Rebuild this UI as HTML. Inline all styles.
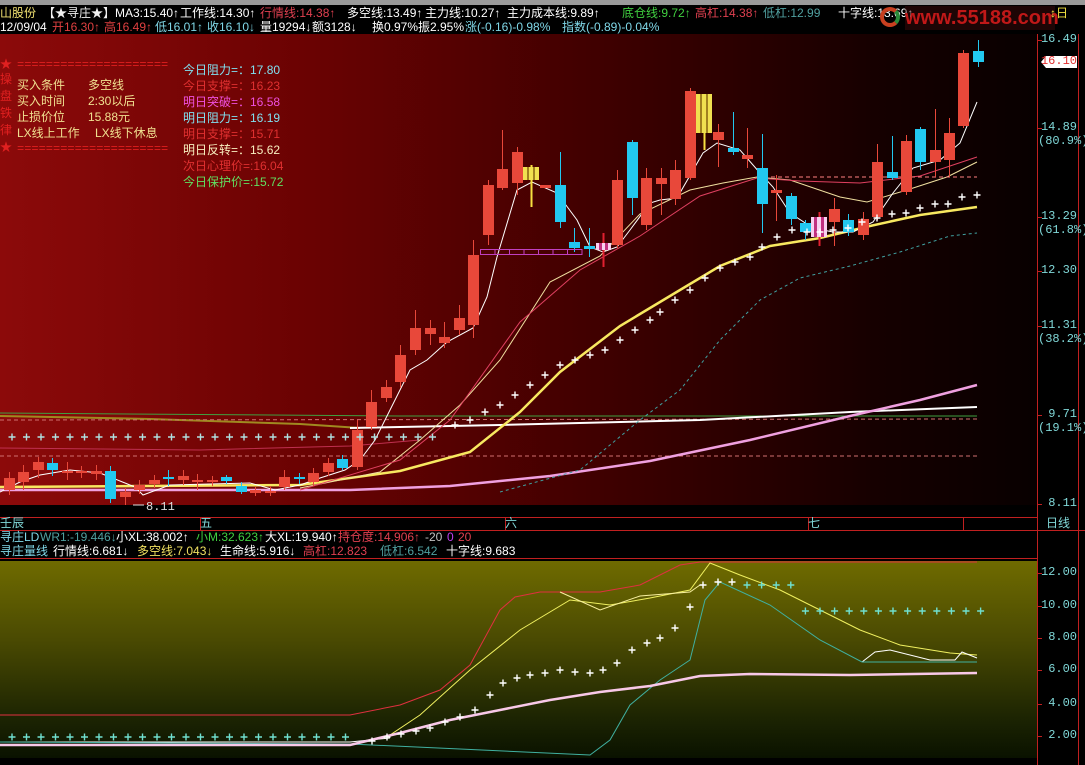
<!DOCTYPE html>
<html><head><meta charset="utf-8">
<style>
*{margin:0;padding:0}
body{width:1085px;height:765px;background:#000;overflow:hidden;position:relative;font-family:"Liberation Sans","Noto Sans CJK SC",sans-serif;font-size:12px;}
.t{position:absolute;white-space:nowrap;line-height:13px;font-size:12px}
.m{font-family:"Liberation Mono","Noto Sans CJK SC",monospace}
#main{position:absolute;left:0;top:34px;width:1037px;height:471px;background:linear-gradient(to right,#8c0a0a 0%,#6a0202 30%,#3c0000 60%,#150000 85%,#080000 100%)}
#sub{position:absolute;left:0;top:561px;width:1037px;height:197px;background:linear-gradient(to bottom,#6f6b00 0%,#4a4a02 40%,#1c2402 80%,#0a1200 100%)}
</style></head><body>
<div style="position:absolute;left:0;top:0;width:1085px;height:5px;background:#9a9a9a"></div>
<div id="main"></div>
<div id="sub"></div>

<svg id="sv" width="1085" height="765" style="position:absolute;left:0;top:0">
<g id="g"></g>
<line x1="1037.5" y1="34" x2="1037.5" y2="765" stroke="#c02020"/>
<line x1="1078.5" y1="34" x2="1078.5" y2="765" stroke="#c02020"/>
<line x1="0" y1="517.5" x2="1037" y2="517.5" stroke="#c02020"/>
<line x1="0" y1="530.5" x2="1085" y2="530.5" stroke="#c02020"/>
<line x1="0" y1="558.5" x2="1037" y2="558.5" stroke="#c02020"/>
<line x1="200.5" y1="517" x2="200.5" y2="530" stroke="#c02020"/>
<line x1="505.5" y1="517" x2="505.5" y2="530" stroke="#c02020"/>
<line x1="808.5" y1="517" x2="808.5" y2="530" stroke="#c02020"/>
<line x1="963.5" y1="517" x2="963.5" y2="530" stroke="#c02020"/>
<g stroke="#c02020">
<line x1="1037" y1="40.5" x2="1042" y2="40.5"/><line x1="1037" y1="128.5" x2="1042" y2="128.5"/><line x1="1037" y1="217.5" x2="1042" y2="217.5"/><line x1="1037" y1="271.5" x2="1042" y2="271.5"/><line x1="1037" y1="326.5" x2="1042" y2="326.5"/><line x1="1037" y1="415.5" x2="1042" y2="415.5"/><line x1="1037" y1="504.5" x2="1042" y2="504.5"/>
<line x1="1037" y1="573.5" x2="1042" y2="573.5"/><line x1="1037" y1="606.5" x2="1042" y2="606.5"/><line x1="1037" y1="638.5" x2="1042" y2="638.5"/><line x1="1037" y1="670.5" x2="1042" y2="670.5"/><line x1="1037" y1="704.5" x2="1042" y2="704.5"/><line x1="1037" y1="736.5" x2="1042" y2="736.5"/>
</g>
<polygon points="1041,62 1046,56 1077,56 1077,68 1046,68" fill="#fff"/>
<line x1="133" y1="505" x2="144" y2="505" stroke="#ddd"/>
</svg>

<script>
var g=document.getElementById('g'),s='';
function P(pts,c,w,d){s+='<polyline fill="none" stroke="'+c+'" stroke-width="'+(w||1)+'"'+(d?' stroke-dasharray="'+d+'"':'')+' points="'+pts+'"/>';}
P('0,413 400,416 977,416','#40a040',1);
P('0,416 150,419 300,424 360,428','#a08a20',2);
P('0,420 977,419','#d07070',1,'4,3');
P('0,456 977,456','#d07070',1,'4,3');
P('0,448 200,450 350,446 420,440','#c03050',1);
P('350,428 500,425 700,420 850,412 977,407','#fff',2);
P('0,490 350,490 450,486 550,476 650,461 750,440 850,416 920,400 977,385','#f0a0e0',2.5);
P('500,492 580,470 640,420 680,390 720,340 760,300 800,278 850,266 900,252 950,236 977,233','#40a0a0',1,'3,3');
P('0,487 300,485 400,471 470,452 520,412 560,372 620,326 680,290 720,266 770,246 820,238 870,226 920,215 977,207','#f8e860',2.5);
P('300,488 380,472 420,440 460,405 500,360 550,282 600,256 640,214 690,190 723,183 757,177 790,180 840,197 867,202 907,190 947,177 977,162','#f0e0a0',1);
P('300,490 400,460 450,420 520,322 580,270 640,236 700,196 757,178 800,181 860,183 920,176 977,157','#e04060',1);
P('757,177 977,177','#ff8080',1,'4,3');
P('0,492 20,482 40,475 70,470 100,473 135,487 143,495 170,485 250,483 275,490 300,485 320,478 345,470 360,460 375,440 390,410 410,370 427,360 447,342 473,328 487,297 497,257 517,190 532,182 557,193 577,220 590,247 603,252 617,247 630,230 650,203 660,200 677,198 703,153 717,143 740,150 760,173 773,187 790,213 813,228 833,232 853,232 873,222 893,193 913,168 940,160 960,143 977,102','#fff',1);
var C=[[9,478,490,0,472,495],[23,472,482,0,465,490],[38,462,470,0,457,478],[52,463,470,1,458,476],[67,471,473,0,462,480],[81,471,473,0,466,478],[96,471,474,0,465,480],[110,471,499,1,466,503],[125,492,497,0,488,505],[139,485,490,0,480,494],[154,480,484,0,475,488],[168,477,479,1,470,486],[183,476,480,0,470,485],[197,480,482,0,474,490],[212,480,482,0,476,486],[226,477,481,1,475,484],[241,486,492,1,482,494],[255,490,493,0,487,496],[270,491,493,0,486,496],[284,477,487,0,470,490],[299,477,479,1,473,484],[313,473,482,0,468,486],[328,463,472,0,458,476],[342,459,468,1,455,470],[357,430,467,0,420,470],[371,402,427,0,390,430],[386,387,398,0,380,402],[400,355,382,0,345,388],[415,328,350,0,310,355],[430,328,334,0,320,345],[444,337,343,0,322,348],[459,318,330,0,305,335],[473,255,325,0,240,338],[488,185,235,0,180,245],[502,169,188,0,130,190],[517,152,183,0,147,195],[560,185,222,1,152,228],[574,242,248,1,228,252],[589,246,249,1,228,257],[617,180,245,0,170,248],[632,142,198,1,140,215],[646,178,225,0,168,230],[661,178,184,0,168,215],[675,170,199,0,160,205],[690,91,178,0,88,180],[718,132,140,0,124,167],[733,148,152,1,112,155],[747,155,159,0,128,168],[762,168,204,1,134,233],[776,190,193,0,175,221],[791,196,219,1,193,225],[805,223,232,1,220,240],[834,209,222,0,198,246],[848,220,232,1,214,236],[863,219,235,0,212,240],[877,162,217,0,144,220],[892,172,178,1,136,180],[906,141,192,0,135,195],[920,129,162,1,127,170],[935,150,162,0,109,177],[949,133,160,0,118,177],[963,53,126,0,50,128],[978,51,62,1,40,67]];
C.forEach(function(c){var col=c[3]?'#22c8f0':'#e8483a';s+='<line x1="'+c[0]+'.5" y1="'+c[4]+'" x2="'+c[0]+'.5" y2="'+c[5]+'" stroke="'+col+'"/><rect x="'+(c[0]-5)+'" y="'+c[1]+'" width="11" height="'+Math.max(2,c[2]-c[1])+'" fill="'+col+'"/>';});
s+='<line x1="531.5" y1="165" x2="531.5" y2="207" stroke="#f8e040" stroke-width="2"/><rect x="523" y="167" width="16" height="13" fill="#f0e050"/><rect x="527" y="167" width="2" height="13" fill="#a08020"/><rect x="533" y="167" width="2" height="13" fill="#a08020"/>';
s+='<rect x="540" y="185" width="11" height="3" fill="#e8483a"/>';
s+='<line x1="704.5" y1="94" x2="704.5" y2="150" stroke="#f8e040" stroke-width="2"/><rect x="696" y="94" width="16" height="39" fill="#f0e050"/><rect x="700" y="94" width="2" height="39" fill="#a08020"/><rect x="706" y="94" width="2" height="39" fill="#a08020"/>';
s+='<line x1="603.5" y1="233" x2="603.5" y2="267" stroke="#e02030" stroke-width="2"/><rect x="596" y="243" width="15" height="7" fill="#f8d0f0"/><rect x="599" y="243" width="3" height="7" fill="#c03080"/><rect x="605" y="243" width="3" height="7" fill="#c03080"/>';
s+='<line x1="819.5" y1="212" x2="819.5" y2="246" stroke="#e02030" stroke-width="2"/><rect x="811" y="217" width="16" height="20" fill="#f8d0f0"/><rect x="814" y="217" width="3" height="20" fill="#c03080"/><rect x="821" y="217" width="3" height="20" fill="#c03080"/>';
for(var i=0;i<7;i++)s+='<rect x="'+(480.5+i*14.5)+'" y="249.5" width="14.5" height="5" fill="none" stroke="#c040c0"/>';
function X(x,y,c){s+='<path d="M'+(x-3.5)+' '+y+'h7M'+x+' '+(y-3.5)+'v7" stroke="'+c+'" stroke-width="1.4"/>';}
for(var x=12;x<445;x+=14.5)X(x,437,'#b0e0e0');
[[455,425],[470,420],[485,412],[500,405],[515,395],[530,385],[545,375],[560,365],[575,360],[590,355],[605,350],[620,340],[635,330],[650,320],[660,312],[675,300],[690,290],[705,278],[720,268],[735,262],[750,257],[762,247],[777,237],[792,230],[807,232],[820,232],[833,230],[848,228],[862,222],[877,218],[892,214],[906,213],[920,208],[935,204],[948,204],[962,197],[977,195]].forEach(function(p){X(p[0],p[1],'#fff');});
P('0,742 350,742 390,738','#fff',1);
P('0,715 350,715 400,705 440,690 470,665 500,610 515,597 540,592 600,592 640,585 680,565 700,562 977,562','#e03040',1);
P('0,745 350,745 390,735 420,715 470,670 520,630 570,600 610,605 650,598 690,590 710,563 740,575 780,590 820,610 860,630 900,645 950,653 977,655','#f0f060',1);
P('560,592 600,610 640,596 690,592 700,585','#f8f0a0',1);
P('862,662 875,652 890,650 930,660 955,660 962,652 977,658','#fff',1);
P('0,742 350,744 590,755 610,740 630,705 660,680 690,660 705,600 720,582 770,605 820,640 862,662 977,662','#40b0a0',1);
P('0,745 350,745 400,733 450,720 500,710 550,700 600,692 650,686 700,676 750,674 850,675 977,673','#f8c8e8',2.5);
for(var x=12;x<360;x+=14.5)X(x,737,'#70e0d0');
[[372,741],[387,737],[401,734],[416,731],[430,728],[445,722],[460,717],[475,710],[490,695],[503,683],[517,678],[530,675],[545,673],[560,670],[575,672],[590,673],[603,670],[617,663],[632,650],[647,643],[660,638],[675,628],[690,607],[703,585],[718,582],[732,582]].forEach(function(p){X(p[0],p[1],'#fff');});
for(var x=747;x<985;x+=14.6)X(x,x<800?585:611,'#70e0d0');
g.innerHTML=s;
</script>

<div class="t" style="left:0;top:7px;color:#f0e070">山股份</div>
<div class="t" style="left:43px;top:7px;color:#f0f0f0">【★寻庄★】</div>
<div class="t" style="left:115px;top:7px;color:#fff">MA3:15.40↑</div>
<div class="t" style="left:180px;top:7px;color:#fff">工作线:14.30↑</div>
<div class="t" style="left:260px;top:7px;color:#e04050">行情线:14.38↑</div>
<div class="t" style="left:347px;top:7px;color:#fff">多空线:13.49↑</div>
<div class="t" style="left:425px;top:7px;color:#fff">主力线:10.27↑</div>
<div class="t" style="left:507px;top:7px;color:#fff">主力成本线:9.89↑</div>
<div class="t" style="left:622px;top:7px;color:#40d040">底仓线:9.72↑</div>
<div class="t" style="left:695px;top:7px;color:#e04050">高杠:14.38↑</div>
<div class="t" style="left:763px;top:7px;color:#50a0a0">低杠:12.99</div>
<div class="t" style="left:838px;top:7px;color:#fff">十字线:13.69↑</div>
<div class="t" style="left:905px;top:6px;width:150px;height:24px;background:rgba(60,10,10,.5)"></div>
<div style="position:absolute;left:880px;top:7px;width:20px;height:20px;border-radius:50%;border:4px solid #c84020;border-right-color:#2a8a3a;box-sizing:border-box"></div>
<div class="t" style="left:905px;top:7px;color:#c01818;font-weight:bold;font-size:20px;line-height:22px">www.55188.com</div>
<div class="t" style="left:1050px;top:7px;color:#f0e040">↕日</div>

<div class="t" style="left:0;top:21px;color:#fff">12/09/04</div>
<div class="t" style="left:52px;top:21px;color:#e04040">开16.30↑</div>
<div class="t" style="left:104px;top:21px;color:#e04040">高16.49↑</div>
<div class="t" style="left:155px;top:21px;color:#80d8e8">低16.01↑</div>
<div class="t" style="left:207px;top:21px;color:#80d8e8">收16.10↓</div>
<div class="t" style="left:260px;top:21px;color:#fff">量19294↓</div>
<div class="t" style="left:312px;top:21px;color:#fff">额3128↓</div>
<div class="t" style="left:372px;top:21px;color:#fff">换0.97%</div>
<div class="t" style="left:418px;top:21px;color:#fff">振2.95%</div>
<div class="t" style="left:465px;top:21px;color:#80d8e8">涨(-0.16)-0.98%</div>
<div class="t" style="left:562px;top:21px;color:#80d8e8">指数(-0.89)-0.04%</div>

<div class="t" style="left:0;top:58px;color:#e02020">★</div>
<div class="t" style="left:0;top:73px;color:#e02020">操</div>
<div class="t" style="left:0;top:90px;color:#e02020">盘</div>
<div class="t" style="left:0;top:107px;color:#e02020">铁</div>
<div class="t" style="left:0;top:124px;color:#e02020">律</div>
<div class="t" style="left:0;top:141px;color:#e02020">★</div>
<div class="t m" style="left:17px;top:59px;color:#e02020">=====================</div>
<div class="t m" style="left:17px;top:143px;color:#e02020">=====================</div>
<div class="t" style="left:17px;top:79px;color:#f0e090">买入条件</div><div class="t" style="left:88px;top:79px;color:#f0e090">多空线</div>
<div class="t" style="left:17px;top:95px;color:#f0e090">买入时间</div><div class="t" style="left:88px;top:95px;color:#f0e090">2:30以后</div>
<div class="t" style="left:17px;top:111px;color:#f0e090">止损价位</div><div class="t" style="left:88px;top:111px;color:#f0e090">15.88元</div>
<div class="t" style="left:17px;top:127px;color:#f0e090">LX线上工作</div><div class="t" style="left:95px;top:127px;color:#f0e090">LX线下休息</div>
<div class="t" style="left:183px;top:64px;color:#80e0f0">今日阻力=：17.80</div>
<div class="t" style="left:183px;top:80px;color:#e03030">今日支撑=：16.23</div>
<div class="t" style="left:183px;top:96px;color:#f050e0">明日突破=：16.58</div>
<div class="t" style="left:183px;top:112px;color:#80e0f0">明日阻力=：16.19</div>
<div class="t" style="left:183px;top:128px;color:#e03030">明日支撑=：15.71</div>
<div class="t" style="left:183px;top:144px;color:#f8f0c0">明日反转=：15.62</div>
<div class="t" style="left:183px;top:160px;color:#e03030">次日心理价=:16.04</div>
<div class="t" style="left:183px;top:176px;color:#60e060">今日保护价=:15.72</div>

<div class="t m" style="left:1040px;top:33px;width:37px;text-align:right;color:#80d8d8">16.49</div>
<div class="t m" style="left:1040px;top:55px;width:37px;text-align:right;color:#e03030">16.10</div>
<div class="t m" style="left:1040px;top:121px;width:37px;text-align:right;color:#80d8d8">14.89</div>
<div class="t m" style="left:1038px;top:135px;color:#80d8d8">(80.9%)</div>
<div class="t m" style="left:1040px;top:210px;width:37px;text-align:right;color:#80d8d8">13.29</div>
<div class="t m" style="left:1038px;top:224px;color:#80d8d8">(61.8%)</div>
<div class="t m" style="left:1040px;top:264px;width:37px;text-align:right;color:#80d8d8">12.30</div>
<div class="t m" style="left:1040px;top:319px;width:37px;text-align:right;color:#80d8d8">11.31</div>
<div class="t m" style="left:1038px;top:333px;color:#80d8d8">(38.2%)</div>
<div class="t m" style="left:1040px;top:408px;width:37px;text-align:right;color:#80d8d8">9.71</div>
<div class="t m" style="left:1038px;top:422px;color:#80d8d8">(19.1%)</div>
<div class="t m" style="left:1040px;top:497px;width:37px;text-align:right;color:#80d8d8">8.11</div>
<div class="t m" style="left:146px;top:501px;color:#ddd">8.11</div>
<div class="t" style="left:1046px;top:517px;color:#80d8d8">日线</div>
<div class="t" style="left:0;top:517px;color:#80d8d8">壬辰</div>
<div class="t" style="left:200px;top:517px;color:#80d8d8">五</div>
<div class="t" style="left:505px;top:517px;color:#80d8d8">六</div>
<div class="t" style="left:808px;top:517px;color:#80d8d8">七</div>
<div class="t m" style="left:1040px;top:566px;width:37px;text-align:right;color:#80d8d8">12.00</div>
<div class="t m" style="left:1040px;top:599px;width:37px;text-align:right;color:#80d8d8">10.00</div>
<div class="t m" style="left:1040px;top:631px;width:37px;text-align:right;color:#80d8d8">8.00</div>
<div class="t m" style="left:1040px;top:663px;width:37px;text-align:right;color:#80d8d8">6.00</div>
<div class="t m" style="left:1040px;top:697px;width:37px;text-align:right;color:#80d8d8">4.00</div>
<div class="t m" style="left:1040px;top:729px;width:37px;text-align:right;color:#80d8d8">2.00</div>

<div class="t" style="left:0;top:531px;color:#80d8e8">寻庄LD</div>
<div class="t" style="left:40px;top:531px;color:#50a0a0">WR1:-19.446↓</div>
<div class="t" style="left:116px;top:531px;color:#fff">小XL:38.002↑</div>
<div class="t" style="left:196px;top:531px;color:#40d040">小M:32.623↑</div>
<div class="t" style="left:265px;top:531px;color:#fff">大XL:19.940↑</div>
<div class="t" style="left:338px;top:531px;color:#e04050">持仓度:14.906↑</div>
<div class="t" style="left:425px;top:531px;color:#c0c0c0">-20</div>
<div class="t" style="left:447px;top:531px;color:#c040f0">0</div>
<div class="t" style="left:458px;top:531px;color:#e04050">20</div>
<div class="t" style="left:0;top:545px;color:#80d8e8">寻庄量线</div>
<div class="t" style="left:53px;top:545px;color:#fff">行情线:6.681↓</div>
<div class="t" style="left:137px;top:545px;color:#f0e060">多空线:7.043↓</div>
<div class="t" style="left:220px;top:545px;color:#fff">生命线:5.916↓</div>
<div class="t" style="left:303px;top:545px;color:#e04050">高杠:12.823</div>
<div class="t" style="left:380px;top:545px;color:#50a0a0">低杠:6.542</div>
<div class="t" style="left:446px;top:545px;color:#fff">十字线:9.683</div>
</body></html>
